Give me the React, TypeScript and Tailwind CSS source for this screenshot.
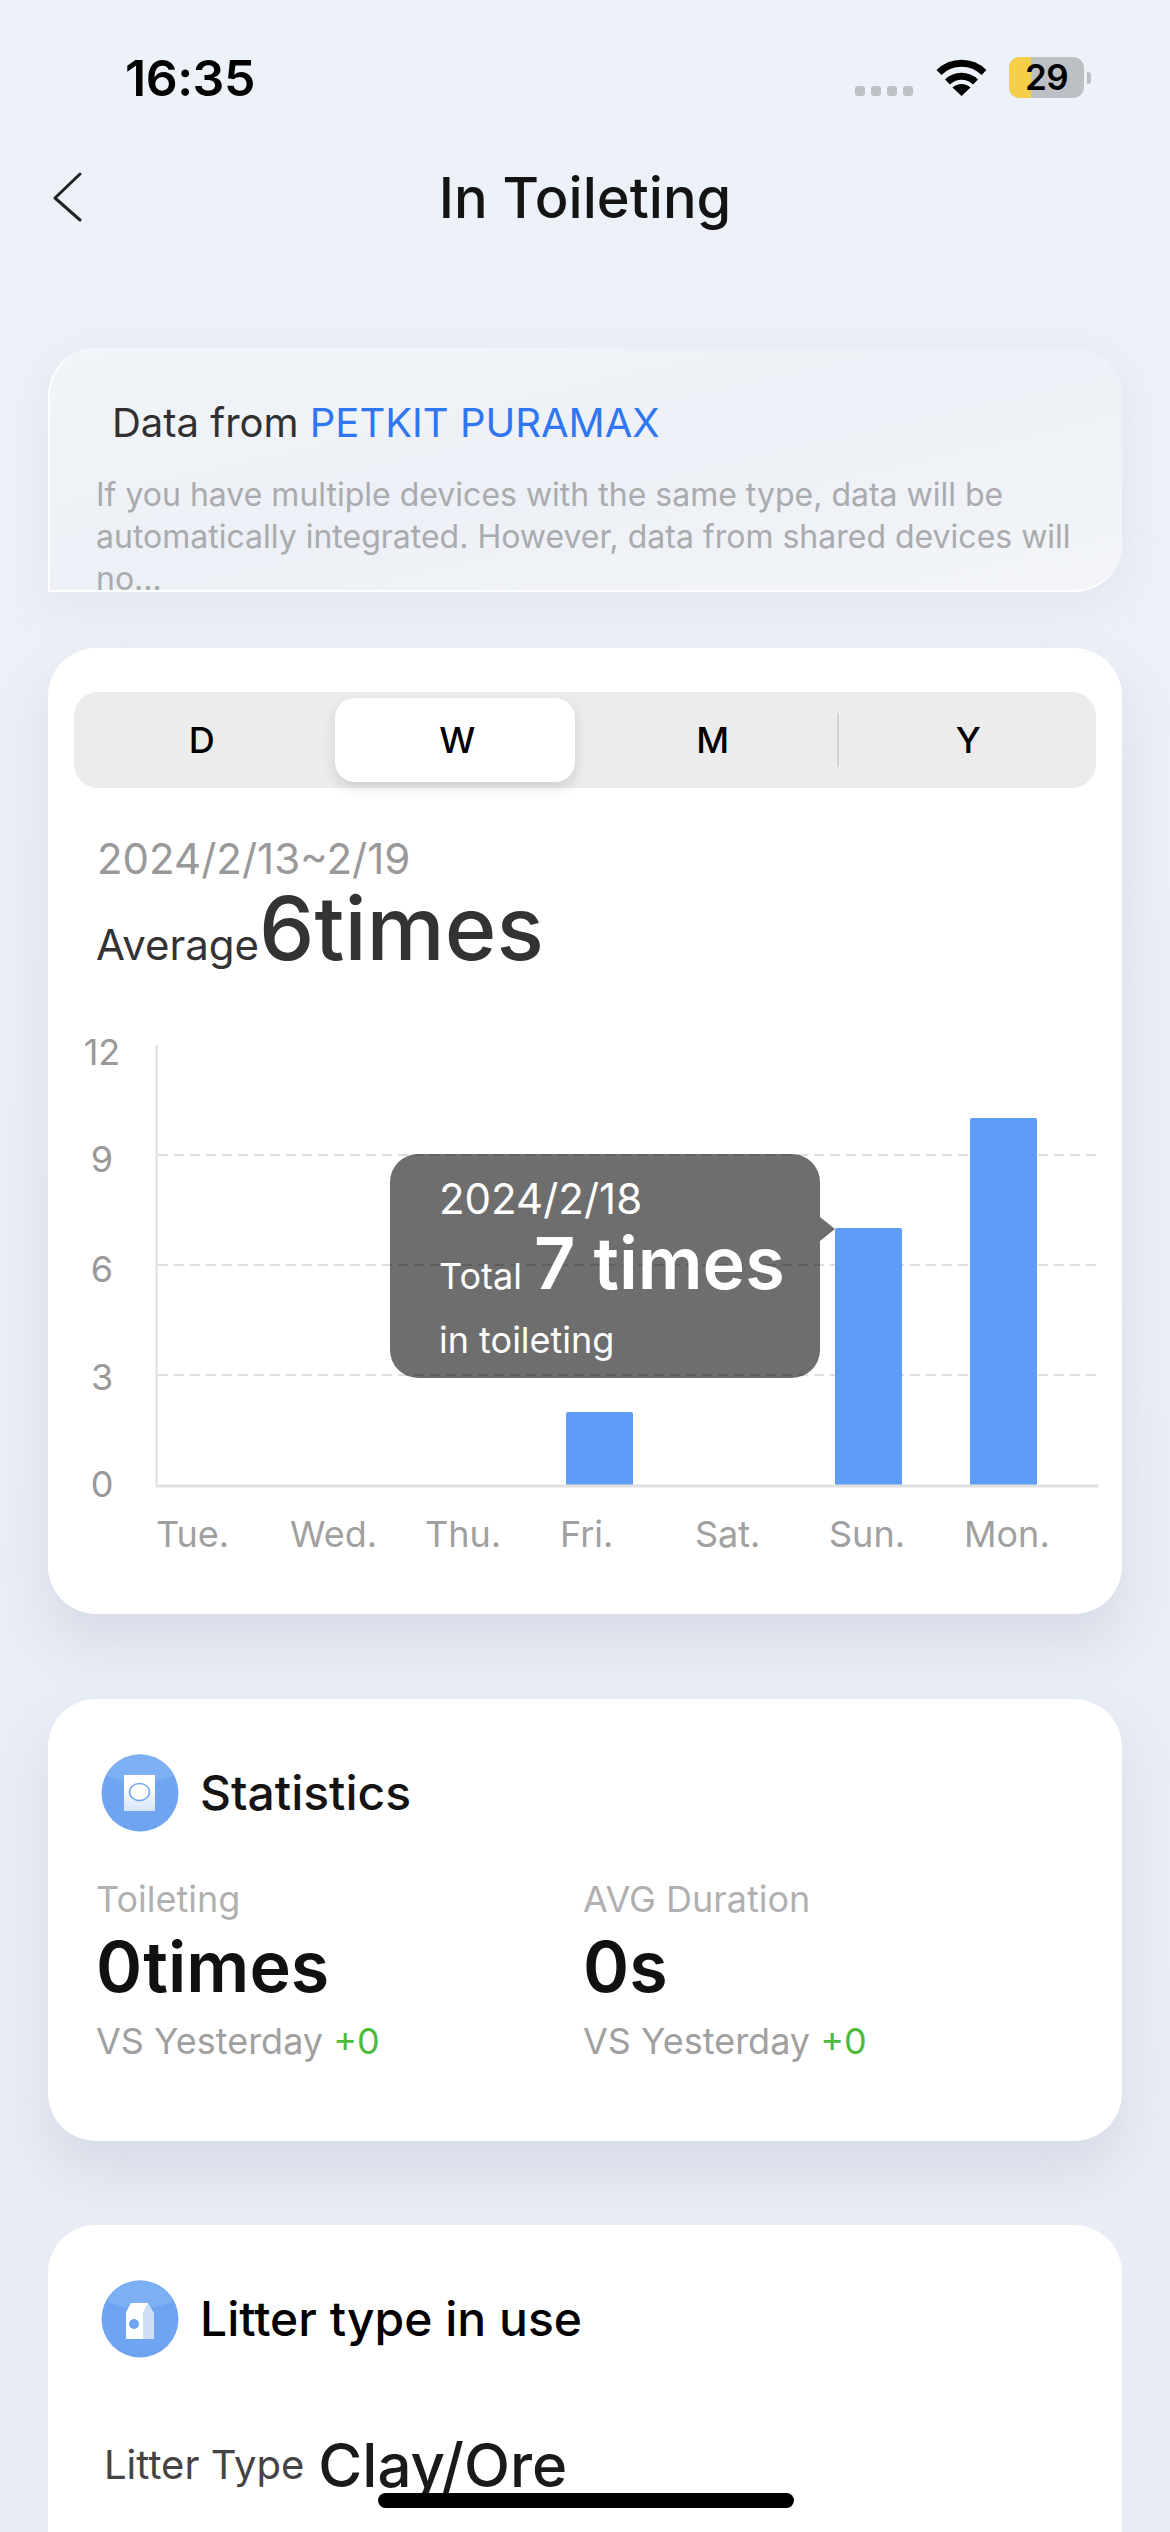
//In Toileting screen
import React from "react";

const yTicks = [
  { label: "12", y: 38 },
  { label: "9", y: 145 },
  { label: "6", y: 255 },
  { label: "3", y: 363 },
  { label: "0", y: 470 },
];

const days = [
  { label: "Tue.", x: 108 },
  { label: "Wed.", x: 242 },
  { label: "Thu.", x: 377 },
  { label: "Fri.", x: 512 },
  { label: "Sat.", x: 647 },
  { label: "Sun.", x: 781 },
  { label: "Mon.", x: 916 },
];

const bars = [
  { x: 518, top: 385 },
  { x: 787, top: 201 },
  { x: 922, top: 91 },
];

function WifiIcon() {
  return (
    <svg width="51" height="37" viewBox="0 0 51 37" fill="none">
      <path d="M3 13.5A32 32 0 0 1 48 13.5" stroke="#000" strokeWidth="7" />
      <path d="M11.5 23A20 20 0 0 1 39.5 23" stroke="#000" strokeWidth="7" />
      <path d="M25.5 37L16.5 28.5A13 13 0 0 1 34.5 28.5Z" fill="#000" />
    </svg>
  );
}

function StatusBar() {
  return (
    <div className="flex h-[130px] shrink-0 items-start justify-between pr-[79px] pl-[125px]">
      <div className="mt-[52px] text-[50px] leading-[52px] font-semibold tracking-[-0.5px] text-black">
        16:35
      </div>
      <div className="mt-[57px] flex items-start">
        <div className="mt-[29px] flex gap-[6px]">
          <div className="h-[10px] w-[10px] rounded-[3px] bg-[#bdc0c5]" />
          <div className="h-[10px] w-[10px] rounded-[3px] bg-[#bdc0c5]" />
          <div className="h-[10px] w-[10px] rounded-[3px] bg-[#bdc0c5]" />
          <div className="h-[10px] w-[10px] rounded-[3px] bg-[#bdc0c5]" />
        </div>
        <div className="mt-[2px] ml-[23px]">
          <WifiIcon />
        </div>
        <div className="relative ml-[22px] flex h-[41px] w-[75px] items-center justify-center overflow-hidden rounded-[11px] bg-[#bcbfc4]">
          <div className="absolute top-0 bottom-0 left-0 w-[22px] bg-[#f5cf47]" />
          <span className="relative text-[35px] leading-[41px] font-semibold tracking-[-0.5px] text-black">
            29
          </span>
        </div>
        <div className="mt-[15px] ml-[3px] h-[12px] w-[4px] rounded-r-[3px] bg-[#bcbfc4]" />
      </div>
    </div>
  );
}

function Header() {
  return (
    <div className="relative flex h-[136px] shrink-0 items-center justify-center">
      <svg
        className="absolute top-[42px] left-[52px]"
        width="30"
        height="50"
        viewBox="0 0 30 50"
        fill="none"
      >
        <path d="M28 2L3 26L28 48" stroke="#222" strokeWidth="3" strokeLinecap="round" strokeLinejoin="round" />
      </svg>
      <h1 className="text-[56px] leading-[68px] font-medium text-[#141414]">In Toileting</h1>
    </div>
  );
}

function DeviceCard() {
  return (
    <div className="mx-[48px] mt-[82px] h-[244px] shrink-0 rounded-t-[48px] rounded-br-[48px] border-b-2 border-l-2 border-white bg-gradient-to-br from-[#f1f4f8] via-[#edf0f6] to-[#f3f5f8] shadow-[0_10px_40px_rgba(190,200,220,0.25)]">
      <div className="pt-[51px] pl-[62px] text-[40px] leading-[48px] text-[#303030]">
        Data from <span className="text-[#2f76f0]">PETKIT PURAMAX</span>
      </div>
      <div className="mt-[27px] pl-[46px] text-[32px] leading-[42px] text-[#a9abae]">
        <div>If you have multiple devices with the same type, data will be</div>
        <div>automatically integrated. However, data from shared devices will no...</div>
      </div>
    </div>
  );
}

function Segment() {
  return (
    <div className="relative grid h-[96px] grid-cols-4 items-center rounded-[24px] bg-[#ececec] text-center text-[36px] leading-[44px] font-medium text-black">
      <div className="absolute top-[6px] left-[261px] h-[84px] w-[240px] rounded-[20px] bg-white shadow-[0_6px_14px_rgba(0,0,0,0.12)]" />
      <div className="absolute top-[21px] left-[763px] h-[54px] w-[2px] bg-[#d4d4d4]" />
      <div className="relative pl-[0px]">D</div>
      <div className="relative">W</div>
      <div className="relative">M</div>
      <div className="relative">Y</div>
    </div>
  );
}

function Tooltip() {
  return (
    <div className="absolute top-[127px] left-[342px] h-[224px] w-[430px] rounded-[28px] bg-black/[0.57] pt-[24px] pl-[49px] text-white">
      <div className="text-[42px] leading-[42px]">2024/2/18</div>
      <div className="mt-[7px] flex items-baseline gap-[12px]">
        <span className="text-[36px] leading-[36px]">Total</span>
        <span className="text-[72px] leading-[72px] font-semibold">7 times</span>
      </div>
      <div className="mt-[23px] text-[36px] leading-[36px]">in toileting</div>
      <svg className="absolute top-[63px] left-full" width="15" height="24" viewBox="0 0 15 24">
        <polygon points="0,0 15,12 0,24" fill="#000" fillOpacity="0.57" />
      </svg>
    </div>
  );
}

function Chart() {
  return (
    <div className="relative h-[587px]">
      <svg width="1074" height="587" viewBox="0 0 1074 587" fill="none">
        <line x1="108.5" y1="18" x2="108.5" y2="458" stroke="#dedede" strokeWidth="2" />
        {[128, 238, 348].map((y) => (
          <line key={y} x1="110" y1={y} x2="1049" y2={y} stroke="#dedede" strokeWidth="2" strokeDasharray="10 6" />
        ))}
        {bars.map((bar) => (
          <path
            key={bar.x}
            d={`M${bar.x} 458V${bar.top + 2}Q${bar.x} ${bar.top} ${bar.x + 2} ${bar.top}H${bar.x + 65}Q${bar.x + 67} ${bar.top} ${bar.x + 67} ${bar.top + 2}V458Z`}
            fill="#5f9cf7"
          />
        ))}
        <line x1="108" y1="459" x2="1050" y2="459" stroke="#e0e0e0" strokeWidth="3" />
        {yTicks.map((tick) => (
          <text key={tick.label} x="54" y={tick.y} textAnchor="middle" className="fill-[#999999] text-[36px]">
            {tick.label}
          </text>
        ))}
        {days.map((day) => (
          <text key={day.label} x={day.x} y="520" className="fill-[#a0a0a0] text-[36px]">
            {day.label}
          </text>
        ))}
      </svg>
      <Tooltip />
    </div>
  );
}

function TrendCard() {
  return (
    <div className="mx-[48px] mt-[56px] shrink-0 rounded-[48px] bg-white shadow-[0_30px_50px_rgba(170,180,200,0.3)]">
      <div className="px-[26px] pt-[44px]">
        <Segment />
        <div className="mt-[50px] pl-[23px] text-[42px] leading-[42px] text-[#999999]">2024/2/13~2/19</div>
        <div className="mt-[4px] flex items-baseline pl-[22px] text-[#333333]">
          <span className="text-[42px] leading-[88px]">Average</span>
          <span className="text-[88px] leading-[88px] font-medium">6times</span>
        </div>
      </div>
      <div className="mt-[38px]">
        <Chart />
      </div>
    </div>
  );
}

function StatsIcon() {
  return (
    <svg width="78" height="78" viewBox="0 0 78 78" fill="none">
      <defs>
        <linearGradient id="paper" x1="0" y1="0" x2="0" y2="1">
          <stop offset="0.3" stopColor="#ffffff" />
          <stop offset="1" stopColor="#d6e4fa" />
        </linearGradient>
      </defs>
      <circle cx="39" cy="39" r="38.5" fill="#6fa5f0" />
      <path d="M5 21A38.5 38.5 0 0 1 73 21Q39 36 5 21Z" fill="#7dafF3" />
      <rect x="23" y="21" width="31" height="36" fill="url(#paper)" />
      <ellipse cx="38.5" cy="38" rx="10" ry="8.5" fill="#ffffff" stroke="#6fa5f0" strokeWidth="1.5" />
    </svg>
  );
}

function LitterIcon() {
  return (
    <svg width="78" height="78" viewBox="0 0 78 78" fill="none">
      <circle cx="39" cy="39" r="38.5" fill="#6fa5f0" />
      <path d="M5 21A38.5 38.5 0 0 1 73 21Q39 36 5 21Z" fill="#7dafF3" />
      <path d="M47 23L53 33V59H42V33Z" fill="#cfdff8" />
      <path d="M30 23H47L42 33V59H25V32Z" fill="#ffffff" />
      <circle cx="33" cy="44" r="5" fill="#6fa5f0" />
    </svg>
  );
}

function StatColumn({ label, value }: { label: string; value: string }) {
  return (
    <div>
      <div className="text-[36px] leading-[36px] text-[#b0b0b0]">{label}</div>
      <div className="mt-[15px] text-[70px] leading-[70px] font-semibold text-[#111111]">{value}</div>
      <div className="mt-[21px] text-[36px] leading-[36px] text-[#a0a0a0]">
        VS Yesterday <span className="text-[#4cbb3c]">+0</span>
      </div>
    </div>
  );
}

function StatisticsCard() {
  return (
    <div className="mx-[48px] mt-[85px] shrink-0 rounded-[48px] bg-white pt-[55px] pb-[82px] shadow-[0_30px_50px_rgba(170,180,200,0.3)]">
      <div className="flex items-center gap-[21px] pl-[53px]">
        <StatsIcon />
        <div className="text-[48px] leading-[56px] font-medium text-[#141414]">Statistics</div>
      </div>
      <div className="mt-[49px] grid grid-cols-[487px_1fr] pl-[48px]">
        <StatColumn label="Toileting" value="0times" />
        <StatColumn label="AVG Duration" value="0s" />
      </div>
    </div>
  );
}

function LitterCard() {
  return (
    <div className="mx-[48px] mt-[84px] h-[400px] shrink-0 rounded-[48px] bg-white pt-[55px]">
      <div className="flex items-center gap-[21px] pl-[53px]">
        <LitterIcon />
        <div className="text-[48px] leading-[56px] font-medium text-black">Litter type in use</div>
      </div>
      <div className="mt-[77px] flex items-center gap-[14px] pl-[56px]">
        <span className="text-[40px] leading-[60px] text-[#444444]">Litter Type</span>
        <span className="text-[60px] leading-[60px] font-medium text-[#1a1a1a]">Clay/Ore</span>
      </div>
    </div>
  );
}

export default function App() {
  return (
    <div className="relative flex h-[2532px] w-[1170px] flex-col overflow-hidden bg-gradient-to-b from-[#edf1f8] to-[#e8ecf4] font-['Inter',sans-serif]">
      <StatusBar />
      <Header />
      <DeviceCard />
      <TrendCard />
      <StatisticsCard />
      <LitterCard />
      <div className="absolute top-[2493px] left-[378px] h-[15px] w-[416px] rounded-[8px] bg-black" />
    </div>
  );
}
